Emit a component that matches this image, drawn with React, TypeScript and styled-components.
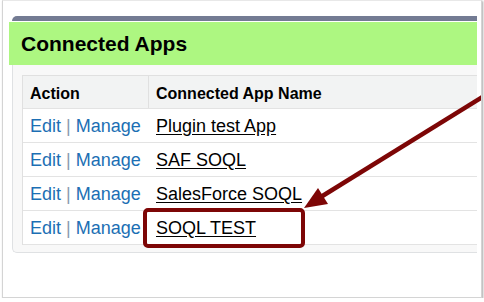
import React from "react";
import styled, { createGlobalStyle } from "styled-components";

const GlobalStyle = createGlobalStyle`
  html, body {
    margin: 0;
    padding: 0;
    background: #ffffff;
    font-family: "Liberation Sans", Arial, sans-serif;
  }
`;

const Frame = styled.div`
  position: relative;
  box-sizing: border-box;
  margin-left: 2px;
  width: 480px;
  height: 298px;
  border: 1px solid #d4d4d4;
  border-top-color: #e8e8e8;
  box-shadow: 1px 1px 2px rgba(0, 0, 0, 0.35);
  overflow: hidden;
  padding: 15px 4px 0 9px;
`;

const Panel = styled.div`
  display: flex;
  flex-direction: column;
  border-top: 5px solid #737b93;
  border-radius: 5px 0 0 0;
`;

const Header = styled.div`
  margin: 1px 0 0 -3px;
  height: 43px;
  background: #adf781;
  display: flex;
  align-items: center;
  padding: 1px 0 0 12px;
  box-sizing: border-box;
  font-size: 21px;
  font-weight: bold;
  color: #000;
`;

const Body = styled.div`
  background: #f8f8f8;
  border: 1px solid #dfe1e3;
  border-top: none;
  border-right: none;
  border-radius: 0 0 0 5px;
  padding: 10px 0 7px 9px;
`;

const Table = styled.div`
  border-left: 1px solid #e0e0e0;
  border-top: 1px solid #e0e0e0;
  background: #fff;
`;

const Row = styled.div<{ $head?: boolean }>`
  display: grid;
  grid-template-columns: 126px 1fr;
  height: ${(p) => (p.$head ? 32 : 33)}px;
  border-bottom: 1px solid #e3e3e3;
  background: ${(p) => (p.$head ? "#f2f3f3" : "#ffffff")};
`;

const Cell = styled.div<{ $head?: boolean; $first?: boolean }>`
  display: flex;
  align-items: center;
  padding: ${(p) => (p.$head ? "3px 0 0 7px" : "1px 0 0 7px")};
  border-right: ${(p) => (p.$head && p.$first ? "1px solid #e0e0e0" : "none")};
  font-size: ${(p) => (p.$head ? 16 : 18)}px;
  font-weight: ${(p) => (p.$head ? "bold" : "normal")};
  color: #000;
  white-space: nowrap;
`;

const ActionLink = styled.span`
  color: #1c6fb4;
`;

const Pipe = styled.span`
  color: #8a9bb0;
  margin: 0 5px;
`;

const AppLink = styled.span`
  color: #000;
  text-decoration: underline;
  text-underline-offset: 2px;
`;

const Highlight = styled.div`
  position: absolute;
  left: 140px;
  top: 207px;
  width: 162px;
  height: 40px;
  box-sizing: border-box;
  border: 4px solid #7d0606;
  border-radius: 5px;
`;

const Arrow = styled.svg`
  position: absolute;
  left: -3px;
  top: -1px;
  width: 490px;
  height: 302px;
  pointer-events: none;
`;

const apps = ["Plugin test App", "SAF SOQL", "SalesForce SOQL", "SOQL TEST"];

export default function App() {
  return (
    <>
      <GlobalStyle />
      <Frame>
        <Panel>
          <Header>Connected Apps</Header>
          <Body>
            <Table>
              <Row $head>
                <Cell $head $first>Action</Cell>
                <Cell $head>Connected App Name</Cell>
              </Row>
              {apps.map((name) => (
                <Row key={name}>
                  <Cell $first>
                    <ActionLink>Edit</ActionLink>
                    <Pipe>|</Pipe>
                    <ActionLink>Manage</ActionLink>
                  </Cell>
                  <Cell>
                    <AppLink>{name}</AppLink>
                  </Cell>
                </Row>
              ))}
            </Table>
          </Body>
        </Panel>
        <Highlight />
        <Arrow viewBox="0 0 490 302">
          <line x1="492" y1="91" x2="320" y2="197.5" stroke="#7d0606" strokeWidth="4.5" />
          <polygon points="304,208 328,204 318,188" fill="#7d0606" />
        </Arrow>
      </Frame>
    </>
  );
}
